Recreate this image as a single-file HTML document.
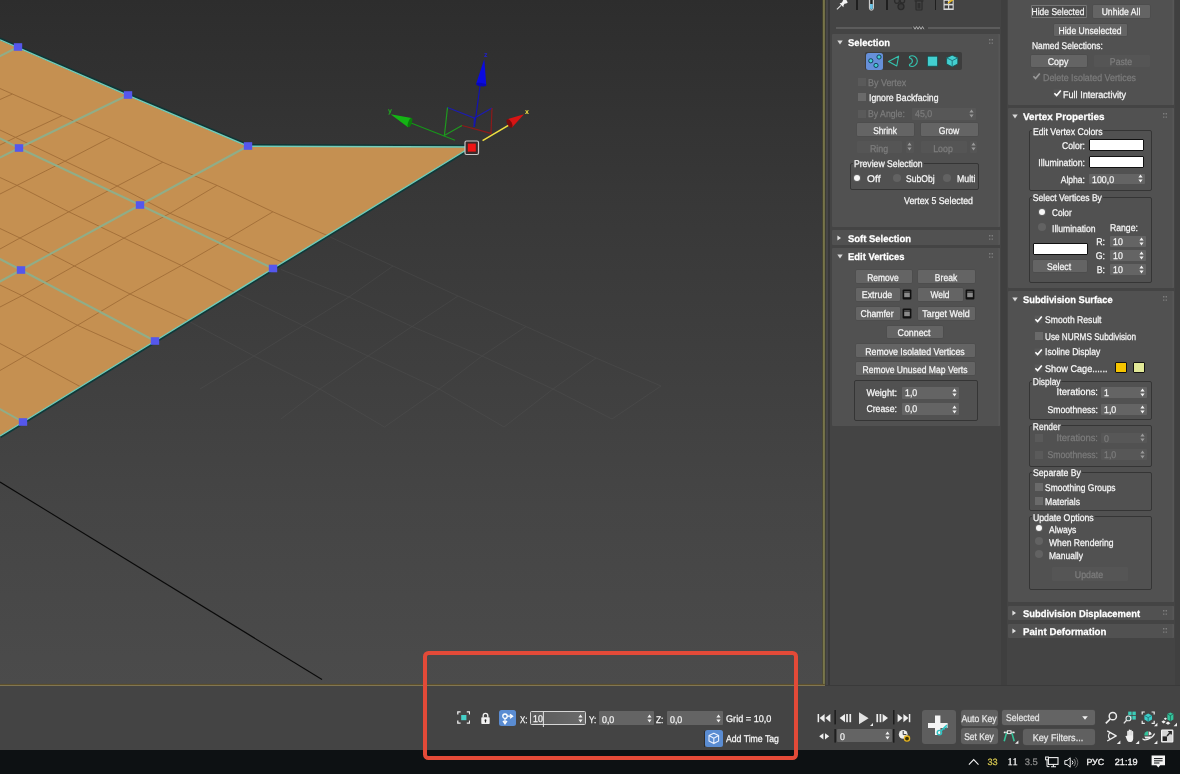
<!DOCTYPE html>
<html lang="en"><head><meta charset="utf-8"><title>3ds Max - Editable Poly vertex position</title>
<style>
*{box-sizing:border-box}
html,body{margin:0;padding:0}
body{width:1180px;height:774px;overflow:hidden;background:#444;position:relative;font-family:"Liberation Sans",sans-serif;font-size:9.8px;color:#f8f8f8;line-height:11px;-webkit-text-stroke:0.25px currentColor;text-rendering:geometricPrecision}
#w{position:absolute;left:0;top:0;width:1180px;height:774px;overflow:hidden;will-change:transform}
.a{position:absolute;white-space:nowrap}
.ro{position:absolute;background:#515151;border-radius:1px;box-shadow:inset -1.6px 0 0 #575757}
.t{position:absolute;white-space:nowrap;font-weight:bold;font-size:9.8px;color:#fff;line-height:11px}
.b{position:absolute;background:#646464;border-radius:1px;text-align:center;white-space:nowrap;color:#f6f6f6;box-shadow:0 0 0 0.4px #4a4a4a}
.b.d{background:#555555;color:#7e7e7e;box-shadow:none}
.g{position:absolute;border:1px solid #353535;border-radius:2px}
.gl{position:absolute;white-space:nowrap;background:#515151;padding:0 1px;line-height:10px}
.l{position:absolute;white-space:nowrap}
.s{display:inline-block;white-space:nowrap}
.s.c{position:absolute;left:50%;top:0;margin-left:-0.7px}
.s.v{transform:scaleX(0.9);transform-origin:0 50%}
.l.d{color:#7c7c7c}
.r{text-align:right}
.in{position:absolute;background:#646464;border-radius:1px;padding-left:3px;white-space:nowrap;color:#f4f4f4}
.in.d{background:#575757;color:#7c7c7c}
.sp{position:absolute;right:2px;top:50%;width:5px;height:9px;margin-top:-4.5px}
.cb{position:absolute;width:8px;height:8px;background:#6a6a6a}
.cb.d{background:#5a5a5a}
.ck{position:absolute;width:9px;height:9px}
.rd{position:absolute;width:8px;height:8px;border-radius:50%;background:#626262}
.rd.on{background:#f6f6f6;width:6px;height:6px}
.sw{position:absolute;background:#fff;border:1px solid #111;border-radius:1px}
.tri{position:absolute;width:0;height:0}
.grip{position:absolute;width:4px;height:5px;opacity:.42}
</style></head>
<body>
<div id="w">

<svg class="a" style="left:0;top:0" width="827" height="687" viewBox="0 0 827 687">
<defs><linearGradient id="vg" x1="0" y1="0" x2="0" y2="1"><stop offset="0" stop-color="#2d2d2d"/><stop offset="0.3" stop-color="#383838"/><stop offset="0.735" stop-color="#454545"/><stop offset="1" stop-color="#4b4b4b"/></linearGradient>
<clipPath id="oc"><polygon points="0,39.8 18,47.6 128,95.3 248,146.2 471,147 273,268.5 155,341 23,422 0,436"/></clipPath></defs>
<rect x="0" y="0" width="827" height="687" fill="url(#vg)"/>
<g stroke="#5a5a5a" stroke-width="0.9" opacity="0.32" fill="none">
<line x1="330" y1="237" x2="393" y2="266"/>
<line x1="393" y1="266" x2="458" y2="296"/>
<line x1="458" y1="296" x2="526" y2="326.5"/>
<line x1="526" y1="326.5" x2="596" y2="358"/>
<line x1="596" y1="358" x2="661" y2="386"/>
<line x1="281" y1="269.5" x2="349" y2="297"/>
<line x1="349" y1="297" x2="412" y2="326.5"/>
<line x1="412" y1="326.5" x2="482" y2="356"/>
<line x1="482" y1="356" x2="553" y2="389"/>
<line x1="553" y1="389" x2="612" y2="419"/>
<line x1="234" y1="292" x2="303" y2="325.5"/>
<line x1="303" y1="325.5" x2="368" y2="356"/>
<line x1="368" y1="356" x2="439" y2="389"/>
<line x1="439" y1="389" x2="504" y2="427"/>
<line x1="188" y1="320.8" x2="254" y2="356"/>
<line x1="254" y1="356" x2="320" y2="389"/>
<line x1="320" y1="389" x2="384.5" y2="427"/>
<line x1="393" y1="266" x2="349" y2="297"/>
<line x1="349" y1="297" x2="303" y2="325.5"/>
<line x1="303" y1="325.5" x2="254" y2="356"/>
<line x1="254" y1="356" x2="200" y2="389"/>
<line x1="458" y1="296" x2="412" y2="326.5"/>
<line x1="412" y1="326.5" x2="368" y2="356"/>
<line x1="368" y1="356" x2="320" y2="389"/>
<line x1="320" y1="389" x2="281" y2="419"/>
<line x1="526" y1="326.5" x2="482" y2="356"/>
<line x1="482" y1="356" x2="439" y2="389"/>
<line x1="439" y1="389" x2="384.5" y2="427"/>
<line x1="596" y1="358" x2="553" y2="389"/>
<line x1="553" y1="389" x2="504" y2="427"/>
<line x1="661" y1="386" x2="612" y2="419"/>
</g>
<polygon points="0,39.8 18,47.6 128,95.3 248,146.2 471,147 273,268.5 155,341 23,422 0,436" fill="#c59051"/>
<g clip-path="url(#oc)" stroke="#a06d38" stroke-width="0.9" fill="none">
<polyline points="0,88.5 12.4,94 62,115.7 110.7,137.4 162.8,162.2 217,185.4 272.9,211.8 327,235.4"/>
<polyline points="0,130 15.5,137.4 65,161.2 117.2,186 170,213.3 228,238.5 283,262.5"/>
<polyline points="0,177.5 17,185.4 68.8,211.8 124,238.1 181.4,265.5 234,292"/>
<polyline points="0,228.5 20,238 74.4,266 130,294 188,320.8"/>
<polyline points="0,285 22,295.6 77.5,325.3 137,352"/>
<polyline points="0,343.5 24.5,356.3 80,386.5"/>
<polyline points="12.4,94 0,99.5"/>
<polyline points="62,115.7 15.5,137.4 0,145"/>
<polyline points="110.7,137.4 65,161.2 17,185.4 0,194"/>
<polyline points="162.8,162.2 117.2,186 68.8,211.8 20,238 0,249"/>
<polyline points="217,185.4 170,213.3 124,238.1 74.4,266 22,295.6 0,307"/>
<polyline points="272.9,211.8 228,238.5 181.4,265.5 130,294 77.5,325.3 24.5,356.3 0,370.5"/>
</g>
<g clip-path="url(#oc)" stroke="#90ad88" stroke-width="2" fill="none" stroke-linecap="round">
<polyline points="18,47 0,56"/>
<polyline points="128,95 19,148 0,157.5"/>
<polyline points="19,148 140,205 273,268.5"/>
<polyline points="248,146 140,205 21,270 0,281.5"/>
<polyline points="21,270 155,341"/>
<polyline points="0,138.5 19,148"/>
<polyline points="0,259 21,270"/>
<polyline points="0,409 23,422"/>
</g>
<polyline points="0,39.8 18,47.6 128,95.3 248,146.2 471,147" fill="none" stroke="#0e3636" stroke-width="2.6" transform="translate(0,-1)"/><polyline points="471,147 273,268.5 155,341 23,422 0,436" fill="none" stroke="#0e3a3a" stroke-width="2.4" transform="translate(0.5,0.9)"/>
<polyline points="0,39.8 18,47.6 128,95.3 248,146.2 471,147 273,268.5 155,341 23,422 0,436" fill="none" stroke="#74cdb9" stroke-width="1.4"/>
<rect x="13.8" y="43.2" width="8.4" height="7.6" fill="#5557ec"/>
<rect x="123.8" y="91.2" width="8.4" height="7.6" fill="#5557ec"/>
<rect x="243.8" y="142.2" width="8.4" height="7.6" fill="#5557ec"/>
<rect x="14.8" y="144.2" width="8.4" height="7.6" fill="#5557ec"/>
<rect x="135.8" y="201.2" width="8.4" height="7.6" fill="#5557ec"/>
<rect x="268.8" y="264.7" width="8.4" height="7.6" fill="#5557ec"/>
<rect x="16.8" y="266.2" width="8.4" height="7.6" fill="#5557ec"/>
<rect x="150.8" y="337.2" width="8.4" height="7.6" fill="#5557ec"/>
<rect x="18.8" y="418.2" width="8.4" height="7.6" fill="#5557ec"/>
<line x1="0" y1="482" x2="322" y2="679.5" stroke="#0a0a0a" stroke-width="1.1"/>
<g fill="none" stroke-width="1.2">
<polyline points="447.5,107.5 474.4,118 492,108" stroke="#1c1cb0"/>
<line x1="474.4" y1="118" x2="474" y2="127" stroke="#1c1cb0"/>
<polyline points="447.5,107.5 444.4,135.4 462,125.5" stroke="#1f9a1f"/>
<polyline points="492,108 491,133.4 462,125.5" stroke="#8c1a1a"/>
<line x1="480.2" y1="85" x2="474.4" y2="127" stroke="#1212b4" stroke-width="1.2"/>
<line x1="411" y1="123" x2="455" y2="140.3" stroke="#17961a" stroke-width="1.2"/>
<line x1="482.6" y1="140.6" x2="510.5" y2="124" stroke="#f0e040" stroke-width="1.5"/>
</g>
<polygon points="484.3,59 476.2,83.5 486.3,85.6" fill="#0a0ae0"/>
<ellipse cx="481.2" cy="84.6" rx="5.2" ry="1.6" fill="#0808b8" transform="rotate(8 481.2 84.6)"/>
<polygon points="390.6,114.2 411.5,118 408,127.2" fill="#14b414"/>
<ellipse cx="410" cy="122.6" rx="1.8" ry="4.8" fill="#0c7a0c" transform="rotate(20 410 122.6)"/>
<polygon points="524,114.3 507.5,119.2 512,127.5" fill="#d81414"/>
<ellipse cx="509.5" cy="123.4" rx="2.2" ry="4.6" fill="#7a0a0a" transform="rotate(-28 509.5 123.4)"/>
<text x="484" y="57" font-family="Liberation Sans, sans-serif" font-size="7" font-weight="bold" fill="#2020d0">z</text>
<text x="388" y="113" font-family="Liberation Sans, sans-serif" font-size="7" font-weight="bold" fill="#20b020">y</text>
<text x="525" y="114" font-family="Liberation Sans, sans-serif" font-size="7" font-weight="bold" fill="#f0e040">x</text>
<rect x="465" y="141" width="13.5" height="13.5" rx="1.5" fill="#3a2a2a" stroke="#c8c8c8" stroke-width="1.2"/>
<rect x="467.8" y="143.6" width="8" height="8" fill="#f01414"/>
<rect x="822.4" y="0" width="0.8" height="685" fill="#4c4a2c"/><rect x="823.1" y="0" width="1.8" height="686" fill="#7f7c4c"/><rect x="824.9" y="0" width="0.9" height="686.6" fill="#3e3d33"/>
<rect x="0" y="683.9" width="824.8" height="1.1" fill="#5c4f2c"/><rect x="0" y="685" width="824.8" height="1.1" fill="#817652"/><rect x="0" y="686" width="826" height="1" fill="#3f4141"/>
</svg><div class="a" style="left:825.6px;top:0;width:2.6px;height:685px;background:#474647"></div>
<div class="a" style="left:828.2px;top:0;width:1.5px;height:685px;background:#383838"></div>
<div class="a" style="left:1001px;top:0;width:6px;height:685px;background:#3f3f3f"></div>
<div class="a" style="left:1175px;top:0;width:5px;height:685px;background:#404040"></div>
<div class="a" style="left:836px;top:27.2px;width:75.5px;height:1.6px;background:#5c5c5c"></div>
<div class="a" style="left:927.5px;top:27.2px;width:72.5px;height:1.6px;background:#5c5c5c"></div>
<svg class="a" style="left:913px;top:26.4px" width="12" height="4" viewBox="0 0 12 4"><path d="M0.5 0.6L2 3.2L3.5 0.6L5 3.2L6.5 0.6L8 3.2L9.5 0.6L11 3.2" fill="none" stroke="#b8b8b8" stroke-width="0.9"/></svg>
<div class="a" style="left:856.3px;top:0;width:1.7px;height:10.2px;background:#1f1f1f"></div>
<div class="a" style="left:886px;top:0;width:1.7px;height:10.2px;background:#1f1f1f"></div>
<div class="a" style="left:934.5px;top:0;width:1.7px;height:10.2px;background:#1f1f1f"></div>
<svg class="a" style="left:836px;top:0" width="13" height="10" viewBox="0 0 13 10"><path d="M0.9 9.3L5 5.4" stroke="#e4e4e4" stroke-width="1.1" fill="none"/><path d="M3.6 3.4L6 2.6L7.2 0H10.4L11.8 2.4L10.2 3.6L8.6 3.8L7.6 5.2L7.4 7.2z" fill="#f4f4f4"/></svg>
<svg class="a" style="left:867.5px;top:0" width="7" height="11" viewBox="0 0 7 11"><path d="M1.4 0V8.2a2 2 0 0 0 4 0V0" fill="none" stroke="#dcdcdc" stroke-width="1"/><path d="M2 4H4.8V8a1.4 1.4 0 0 1-2.8 0z" fill="#6cc4e6"/><rect x="3" y="0" width="0.9" height="4" fill="#1a1a1a"/></svg>
<svg class="a" style="left:893px;top:0" width="15" height="11" viewBox="0 0 15 11"><circle cx="4" cy="1" r="2.4" fill="none" stroke="#2c2c2c" stroke-width="1.3"/><circle cx="9.4" cy="0.8" r="2.2" fill="none" stroke="#2c2c2c" stroke-width="1.3"/><circle cx="8" cy="6.6" r="3" fill="#3a3a3a" stroke="#2a2a2a" stroke-width="1.3"/></svg>
<svg class="a" style="left:914px;top:0" width="10" height="11" viewBox="0 0 10 11"><path d="M0.6 0.8H9.4M2 1.4V9.2a0.8 0.8 0 0 0 0.8 0.8H7.2a0.8 0.8 0 0 0 0.8-0.8V1.4M4.2 3V8.4M5.8 3V8.4" fill="none" stroke="#2b2b2b" stroke-width="1.2"/></svg>
<svg class="a" style="left:943px;top:0" width="12" height="11" viewBox="0 0 12 11"><rect x="0.5" y="-1" width="10.2" height="11" fill="#d8d8d8"/><rect x="1.6" y="0.8" width="3.4" height="3" fill="#3a3a3a"/><rect x="6.2" y="0.8" width="3.4" height="3" fill="#3a3a3a"/><rect x="1.6" y="5.4" width="3.4" height="3" fill="#3a3a3a"/><rect x="6.2" y="5.4" width="3.4" height="3" fill="#3a3a3a"/><path d="M5 3.2L10.8 -1" stroke="#e8b820" stroke-width="1.6"/></svg>
<div class="ro" style="left:832px;top:34px;width:168px;height:193px"></div>
<div class="t" style="left:847.8px;top:37.7px;transform:scaleX(0.964);transform-origin:0 50%">Selection</div>
<svg class="a" style="left:837px;top:39.7px" width="6" height="5" viewBox="0 0 6 5"><path d="M0.3 0.5H5.7L3 4.4z" fill="#d8d8d8"/></svg>
<svg class="grip" style="left:989px;top:38.8px" viewBox="0 0 4 5"><path d="M0 0h1.4v1.4H0zM2.6 0H4v1.4H2.6zM0 3.4h1.4v1.4H0zM2.6 3.4H4v1.4H2.6z" fill="#bbb"/></svg>
<div class="a" style="left:865.2px;top:52px;width:97px;height:18.4px;background:#3d3d3d;border-radius:2px"></div>
<div class="a" style="left:865.5px;top:52.5px;width:17.8px;height:17.6px;background:#6690da;border-radius:2.5px"></div>
<svg class="a" style="left:865.4px;top:52.3px" width="97" height="18" viewBox="0 0 97 18"><g fill="#43cfd0" stroke="#0d3550" stroke-width="0.9"><circle cx="5.8" cy="8.8" r="2.1"/><circle cx="14" cy="5" r="2.1"/><circle cx="11" cy="13.4" r="2.1"/></g><path d="M23.6 9.6L33.6 4.2L31.8 14z" fill="none" stroke="#35c4b0" stroke-width="1.1" stroke-linejoin="round"/><path d="M44.6 4.4A5.3 5.3 0 1 1 44.6 13.8L44.4 12.4C46.8 11.6 47.4 10.4 47.4 9.1C47.4 7.8 46.8 6.6 44.4 5.8z" fill="none" stroke="#35c4b0" stroke-width="1.1" stroke-linejoin="round"/><rect x="62.4" y="4.2" width="10.2" height="10" fill="#43cfd0" stroke="#14504f" stroke-width="0.8"/><path d="M87.2 3.2L92.8 5.8V12L87.2 14.8L81.6 12V5.8z" fill="#43cfd0" stroke="#14504f" stroke-width="0.8"/><path d="M81.6 5.8L87.2 8.6L92.8 5.8M87.2 8.6V14.8" fill="none" stroke="#1d6f78" stroke-width="0.9"/></svg>
<div class="cb d" style="left:858px;top:78.3px"></div>
<div class="l d" style="left:868.1px;top:78.3px;transform:scaleX(0.913);transform-origin:0 50%">By Vertex</div>
<div class="cb" style="left:858px;top:93.2px"></div>
<div class="l" style="left:868.5px;top:92.7px;transform:scaleX(0.886);transform-origin:0 50%">Ignore Backfacing</div>
<div class="cb d" style="left:858px;top:109.6px"></div>
<div class="l d" style="left:868px;top:108.9px;transform:scaleX(0.889);transform-origin:0 50%">By Angle:</div>
<div class="in d" style="left:912px;top:108px;width:64px;height:11.6px;line-height:14.4px"><span class="s v">45,0</span><svg class="sp" viewBox="0 0 5 9"><path d="M2.5 0.6L4.6 3.4H0.4zM2.5 8.4L4.6 5.6H0.4z" fill="#9a9a9a"/></svg></div>
<div class="b" style="left:856.8px;top:123px;width:57.4px;height:13px;line-height:17.4px"><span class="s c" style="transform:translateX(-50%) scaleX(0.853)">Shrink</span></div>
<div class="b" style="left:921px;top:123px;width:57px;height:13px;line-height:17.4px"><span class="s c" style="transform:translateX(-50%) scaleX(0.880)">Grow</span></div>
<div class="b d" style="left:856.8px;top:140.7px;width:45.6px;height:12.6px;line-height:17px"><span class="s c" style="transform:translateX(-50%) scaleX(0.900)">Ring</span></div>
<div class="b d" style="left:921px;top:140.7px;width:46px;height:12.6px;line-height:17px"><span class="s c" style="transform:translateX(-50%) scaleX(0.900)">Loop</span></div>
<div class="b d" style="left:906.2px;top:140.7px;width:7.4px;height:12.6px"><svg style="position:absolute;left:1.2px;top:1.8px" width="5" height="9" viewBox="0 0 5 9"><path d="M2.5 0.6L4.6 3.4H0.4zM2.5 8.4L4.6 5.6H0.4z" fill="#9a9a9a"/></svg></div>
<div class="b d" style="left:969.8px;top:140.7px;width:7.4px;height:12.6px"><svg style="position:absolute;left:1.2px;top:1.8px" width="5" height="9" viewBox="0 0 5 9"><path d="M2.5 0.6L4.6 3.4H0.4zM2.5 8.4L4.6 5.6H0.4z" fill="#9a9a9a"/></svg></div>
<div class="g" style="left:850px;top:162.7px;width:128.6px;height:27.2px"></div>
<div class="gl" style="left:853.2px;top:160.2px;transform:scaleX(0.883);transform-origin:0 50%">Preview Selection</div>
<div class="rd" style="left:853.2px;top:173.6px"></div>
<div class="rd on" style="left:854.2px;top:174.6px"></div>
<div class="l" style="left:866.5px;top:173.6px;transform:scaleX(1.047);transform-origin:0 50%">Off</div>
<div class="rd" style="left:893px;top:173.8px"></div>
<div class="l" style="left:906.4px;top:173.6px;transform:scaleX(0.875);transform-origin:0 50%">SubObj</div>
<div class="rd" style="left:943.4px;top:173.8px"></div>
<div class="l" style="left:956.5px;top:173.6px;transform:scaleX(0.894);transform-origin:0 50%">Multi</div>
<div class="l" style="left:904px;top:195.6px;transform:scaleX(0.898);transform-origin:0 50%">Vertex 5 Selected</div>
<div class="ro" style="left:832px;top:229.5px;width:168px;height:15.2px"></div>
<div class="t" style="left:847.8px;top:233.5px;transform:scaleX(0.964);transform-origin:0 50%">Soft Selection</div>
<svg class="a" style="left:837px;top:234.7px" width="5" height="6" viewBox="0 0 5 6"><path d="M0.4 0.6V5.4L4 3z" fill="#e0e0e0"/></svg>
<svg class="grip" style="left:989px;top:234.8px" viewBox="0 0 4 5"><path d="M0 0h1.4v1.4H0zM2.6 0H4v1.4H2.6zM0 3.4h1.4v1.4H0zM2.6 3.4H4v1.4H2.6z" fill="#bbb"/></svg>
<div class="ro" style="left:832px;top:247.5px;width:168px;height:178.5px"></div>
<div class="t" style="left:847.8px;top:251.8px;transform:scaleX(0.960);transform-origin:0 50%">Edit Vertices</div>
<svg class="a" style="left:837px;top:253.5px" width="6" height="5" viewBox="0 0 6 5"><path d="M0.3 0.5H5.7L3 4.4z" fill="#d8d8d8"/></svg>
<svg class="grip" style="left:989px;top:252.6px" viewBox="0 0 4 5"><path d="M0 0h1.4v1.4H0zM2.6 0H4v1.4H2.6zM0 3.4h1.4v1.4H0zM2.6 3.4H4v1.4H2.6z" fill="#bbb"/></svg>
<div class="b" style="left:855.9px;top:270px;width:56.5px;height:13px;line-height:17.4px"><span class="s c" style="transform:translateX(-50%) scaleX(0.863)">Remove</span></div>
<div class="b" style="left:918.2px;top:270px;width:56.8px;height:13px;line-height:17.4px"><span class="s c" style="transform:translateX(-50%) scaleX(0.871)">Break</span></div>
<div class="b" style="left:855.9px;top:288px;width:44.4px;height:13px;line-height:16.2px"><span class="s c" style="transform:translateX(-50%) scaleX(0.903)">Extrude</span></div>
<svg class="a" style="left:902.2px;top:289px" width="10" height="11" viewBox="0 0 10 11"><rect x="0.6" y="0.6" width="8.8" height="9.8" rx="1" fill="#101010"/><rect x="2.2" y="3.6" width="5.6" height="4.6" fill="#8a8a8a"/><rect x="2.2" y="2.2" width="5.6" height="1" fill="#5a5a5a"/></svg>
<div class="b" style="left:918.2px;top:288px;width:44.4px;height:13px;line-height:16.2px"><span class="s c" style="transform:translateX(-50%) scaleX(0.858)">Weld</span></div>
<svg class="a" style="left:964.6px;top:289px" width="10" height="11" viewBox="0 0 10 11"><rect x="0.6" y="0.6" width="8.8" height="9.8" rx="1" fill="#101010"/><rect x="2.2" y="3.6" width="5.6" height="4.6" fill="#8a8a8a"/><rect x="2.2" y="2.2" width="5.6" height="1" fill="#5a5a5a"/></svg>
<div class="b" style="left:855.9px;top:307px;width:44.4px;height:13px;line-height:16.2px"><span class="s c" style="transform:translateX(-50%) scaleX(0.881)">Chamfer</span></div>
<svg class="a" style="left:902.2px;top:308px" width="10" height="11" viewBox="0 0 10 11"><rect x="0.6" y="0.6" width="8.8" height="9.8" rx="1" fill="#101010"/><rect x="2.2" y="3.6" width="5.6" height="4.6" fill="#8a8a8a"/><rect x="2.2" y="2.2" width="5.6" height="1" fill="#5a5a5a"/></svg>
<div class="b" style="left:918.2px;top:307px;width:56.8px;height:13px;line-height:16.2px"><span class="s c" style="transform:translateX(-50%) scaleX(0.914)">Target Weld</span></div>
<div class="b" style="left:887px;top:325.5px;width:56px;height:12.5px;line-height:16.9px"><span class="s c" style="transform:translateX(-50%) scaleX(0.899)">Connect</span></div>
<div class="b" style="left:855.9px;top:344px;width:119.1px;height:13px;line-height:17.4px"><span class="s c" style="transform:translateX(-50%) scaleX(0.896)">Remove Isolated Vertices</span></div>
<div class="b" style="left:855.9px;top:362.2px;width:119.1px;height:12.9px;line-height:17.3px"><span class="s c" style="transform:translateX(-50%) scaleX(0.876)">Remove Unused Map Verts</span></div>
<div class="g" style="left:854px;top:379.7px;width:123.5px;height:40.9px"></div>
<div class="l r" style="left:776.5px;width:120px;top:387.7px;transform:scaleX(0.926);transform-origin:100% 50%">Weight:</div>
<div class="in" style="left:902px;top:387px;width:57.3px;height:11.6px;line-height:14.4px"><span class="s v">1,0</span><svg class="sp" viewBox="0 0 5 9"><path d="M2.5 0.6L4.6 3.4H0.4zM2.5 8.4L4.6 5.6H0.4z" fill="#f0f0f0"/></svg></div>
<div class="l r" style="left:776.5px;width:120px;top:403.8px;transform:scaleX(0.892);transform-origin:100% 50%">Crease:</div>
<div class="in" style="left:902px;top:403.4px;width:57.3px;height:11.8px;line-height:14.6px"><span class="s v">0,0</span><svg class="sp" viewBox="0 0 5 9"><path d="M2.5 0.6L4.6 3.4H0.4zM2.5 8.4L4.6 5.6H0.4z" fill="#f0f0f0"/></svg></div>
<div class="ro" style="left:1008px;top:-4px;width:166.4px;height:108.7px"></div>
<div class="b" style="left:1030.9px;top:5.4px;width:56.1px;height:12.2px;line-height:16.6px;background:#4d4d4d;box-shadow:inset 0 0 0 0.9px #767676"><span class="s c" style="transform:translateX(-50%) scaleX(0.865)">Hide Selected</span></div>
<div class="b" style="left:1093px;top:5.4px;width:57px;height:12.4px;line-height:16.8px"><span class="s c" style="transform:translateX(-50%) scaleX(0.877)">Unhide All</span></div>
<div class="b" style="left:1054.3px;top:24.2px;width:72.7px;height:12.2px;line-height:16.6px"><span class="s c" style="transform:translateX(-50%) scaleX(0.876)">Hide Unselected</span></div>
<div class="l" style="left:1031.7px;top:40.7px;transform:scaleX(0.862);transform-origin:0 50%">Named Selections:</div>
<div class="b" style="left:1030.7px;top:54.6px;width:56.3px;height:12.2px;line-height:16.6px"><span class="s c" style="transform:translateX(-50%) scaleX(0.900)">Copy</span></div>
<div class="b d" style="left:1094px;top:54.6px;width:56px;height:12.2px;line-height:16.6px"><span class="s c" style="transform:translateX(-50%) scaleX(0.890)">Paste</span></div>
<svg class="ck" style="left:1032.3px;top:72.3px" viewBox="0 0 9 9"><rect x="0.5" y="0.5" width="8" height="8" fill="#545454"/><path d="M1.4 4.2L3.6 6.6L7.8 1.4" fill="none" stroke="#9a9a9a" stroke-width="1.6"/></svg>
<div class="l d" style="left:1042.8px;top:72.6px;transform:scaleX(0.904);transform-origin:0 50%">Delete Isolated Vertices</div>
<svg class="ck" style="left:1052.5px;top:89.3px" viewBox="0 0 9 9"><rect x="0.5" y="0.5" width="8" height="8" fill="#585858"/><path d="M1.4 4.2L3.6 6.6L7.8 1.4" fill="none" stroke="#ffffff" stroke-width="1.6"/></svg>
<div class="l" style="left:1062.7px;top:89.6px;transform:scaleX(0.926);transform-origin:0 50%">Full Interactivity</div>
<div class="ro" style="left:1008px;top:107.5px;width:166.4px;height:180.5px"></div>
<div class="t" style="left:1023.1px;top:111.5px;transform:scaleX(1.012);transform-origin:0 50%">Vertex Properties</div>
<svg class="a" style="left:1012.3px;top:113.7px" width="6" height="5" viewBox="0 0 6 5"><path d="M0.3 0.5H5.7L3 4.4z" fill="#d8d8d8"/></svg>
<svg class="grip" style="left:1163.4px;top:112.8px" viewBox="0 0 4 5"><path d="M0 0h1.4v1.4H0zM2.6 0H4v1.4H2.6zM0 3.4h1.4v1.4H0zM2.6 3.4H4v1.4H2.6z" fill="#bbb"/></svg>
<div class="g" style="left:1029px;top:130.1px;width:122.6px;height:61.3px"></div>
<div class="gl" style="left:1032.3px;top:127.6px;transform:scaleX(0.889);transform-origin:0 50%">Edit Vertex Colors</div>
<div class="l r" style="left:965px;width:120px;top:140.8px;transform:scaleX(0.876);transform-origin:100% 50%">Color:</div>
<div class="sw" style="left:1088.9px;top:139.3px;width:54.7px;height:11.4px;background:#fff"></div>
<div class="l r" style="left:965px;width:120px;top:157.5px;transform:scaleX(0.893);transform-origin:100% 50%">Illumination:</div>
<div class="sw" style="left:1088.9px;top:156.2px;width:54.7px;height:11.4px;background:#fff"></div>
<div class="l r" style="left:965.4px;width:120px;top:174.9px;transform:scaleX(0.875);transform-origin:100% 50%">Alpha:</div>
<div class="in" style="left:1088.9px;top:173.5px;width:56.1px;height:10.9px;line-height:13.7px"><span class="s v">100,0</span><svg class="sp" viewBox="0 0 5 9"><path d="M2.5 0.6L4.6 3.4H0.4zM2.5 8.4L4.6 5.6H0.4z" fill="#f0f0f0"/></svg></div>
<div class="g" style="left:1029px;top:196.9px;width:122.6px;height:86.2px"></div>
<div class="gl" style="left:1032.3px;top:194.4px;transform:scaleX(0.874);transform-origin:0 50%">Select Vertices By</div>
<div class="rd" style="left:1038px;top:208px"></div>
<div class="rd on" style="left:1039px;top:209px"></div>
<div class="l" style="left:1051.9px;top:208.1px;transform:scaleX(0.841);transform-origin:0 50%">Color</div>
<div class="rd" style="left:1038px;top:223.3px"></div>
<div class="l" style="left:1052.2px;top:223.5px;transform:scaleX(0.880);transform-origin:0 50%">Illumination</div>
<div class="l" style="left:1109.9px;top:223.2px;transform:scaleX(0.883);transform-origin:0 50%">Range:</div>
<div class="l r" style="left:984.6px;width:120px;top:236.9px;transform:scaleX(0.900);transform-origin:100% 50%">R:</div>
<div class="in" style="left:1109.9px;top:236.2px;width:36px;height:10.8px;line-height:13.6px"><span class="s v">10</span><svg class="sp" viewBox="0 0 5 9"><path d="M2.5 0.6L4.6 3.4H0.4zM2.5 8.4L4.6 5.6H0.4z" fill="#f0f0f0"/></svg></div>
<div class="l r" style="left:984.6px;width:120px;top:250.8px;transform:scaleX(0.900);transform-origin:100% 50%">G:</div>
<div class="in" style="left:1109.9px;top:250px;width:36px;height:11px;line-height:13.8px"><span class="s v">10</span><svg class="sp" viewBox="0 0 5 9"><path d="M2.5 0.6L4.6 3.4H0.4zM2.5 8.4L4.6 5.6H0.4z" fill="#f0f0f0"/></svg></div>
<div class="l r" style="left:984.6px;width:120px;top:264.85px;transform:scaleX(0.900);transform-origin:100% 50%">B:</div>
<div class="in" style="left:1109.9px;top:264.1px;width:36px;height:10.9px;line-height:13.7px"><span class="s v">10</span><svg class="sp" viewBox="0 0 5 9"><path d="M2.5 0.6L4.6 3.4H0.4zM2.5 8.4L4.6 5.6H0.4z" fill="#f0f0f0"/></svg></div>
<div class="sw" style="left:1032.8px;top:243.1px;width:55px;height:11.8px;background:#fff"></div>
<div class="b" style="left:1032.8px;top:260.1px;width:54.2px;height:11.9px;line-height:16.3px"><span class="s c" style="transform:translateX(-50%) scaleX(0.885)">Select</span></div>
<div class="ro" style="left:1008px;top:290.5px;width:166.4px;height:311.3px"></div>
<div class="t" style="left:1023.1px;top:294.5px;transform:scaleX(0.952);transform-origin:0 50%">Subdivision Surface</div>
<svg class="a" style="left:1012.3px;top:296.7px" width="6" height="5" viewBox="0 0 6 5"><path d="M0.3 0.5H5.7L3 4.4z" fill="#d8d8d8"/></svg>
<svg class="grip" style="left:1163.4px;top:295.8px" viewBox="0 0 4 5"><path d="M0 0h1.4v1.4H0zM2.6 0H4v1.4H2.6zM0 3.4h1.4v1.4H0zM2.6 3.4H4v1.4H2.6z" fill="#bbb"/></svg>
<svg class="ck" style="left:1034.4px;top:315.1px" viewBox="0 0 9 9"><rect x="0.5" y="0.5" width="8" height="8" fill="#585858"/><path d="M1.4 4.2L3.6 6.6L7.8 1.4" fill="none" stroke="#ffffff" stroke-width="1.6"/></svg>
<div class="l" style="left:1044.6px;top:314.7px;transform:scaleX(0.879);transform-origin:0 50%">Smooth Result</div>
<div class="cb" style="left:1034.9px;top:332.3px"></div>
<div class="l" style="left:1044.6px;top:331.6px;transform:scaleX(0.836);transform-origin:0 50%">Use NURMS Subdivision</div>
<svg class="ck" style="left:1034.4px;top:347.7px" viewBox="0 0 9 9"><rect x="0.5" y="0.5" width="8" height="8" fill="#585858"/><path d="M1.4 4.2L3.6 6.6L7.8 1.4" fill="none" stroke="#ffffff" stroke-width="1.6"/></svg>
<div class="l" style="left:1044.6px;top:347.3px;transform:scaleX(0.875);transform-origin:0 50%">Isoline Display</div>
<svg class="ck" style="left:1034.4px;top:363.7px" viewBox="0 0 9 9"><rect x="0.5" y="0.5" width="8" height="8" fill="#585858"/><path d="M1.4 4.2L3.6 6.6L7.8 1.4" fill="none" stroke="#ffffff" stroke-width="1.6"/></svg>
<div class="l" style="left:1044.6px;top:364.1px;transform:scaleX(0.933);transform-origin:0 50%">Show Cage......</div>
<div class="sw" style="left:1115.2px;top:361.9px;width:11.8px;height:11.4px;background:#f6c500"></div>
<div class="sw" style="left:1133px;top:361.9px;width:11.8px;height:11.4px;background:#e2e997"></div>
<div class="g" style="left:1029px;top:380.7px;width:122.6px;height:39.8px"></div>
<div class="gl" style="left:1032.3px;top:378.2px;transform:scaleX(0.862);transform-origin:0 50%">Display</div>
<div class="l r" style="left:977.6px;width:120px;top:387.2px;transform:scaleX(0.964);transform-origin:100% 50%">Iterations:</div>
<div class="in" style="left:1101.1px;top:386.9px;width:45.9px;height:11.1px;line-height:13.9px"><span class="s v">1</span><svg class="sp" viewBox="0 0 5 9"><path d="M2.5 0.6L4.6 3.4H0.4zM2.5 8.4L4.6 5.6H0.4z" fill="#f0f0f0"/></svg></div>
<div class="l r" style="left:977.6px;width:120px;top:404.9px;transform:scaleX(0.883);transform-origin:100% 50%">Smoothness:</div>
<div class="in" style="left:1101.1px;top:403.9px;width:45.9px;height:11.1px;line-height:13.9px"><span class="s v">1,0</span><svg class="sp" viewBox="0 0 5 9"><path d="M2.5 0.6L4.6 3.4H0.4zM2.5 8.4L4.6 5.6H0.4z" fill="#f0f0f0"/></svg></div>
<div class="g" style="left:1029px;top:425.4px;width:122.6px;height:41.9px"></div>
<div class="gl" style="left:1032.3px;top:422.9px;transform:scaleX(0.862);transform-origin:0 50%">Render</div>
<div class="cb d" style="left:1034.9px;top:433.8px"></div>
<div class="l d r" style="left:977.6px;width:120px;top:432.8px;transform:scaleX(0.964);transform-origin:100% 50%">Iterations:</div>
<div class="in d" style="left:1101.1px;top:432.5px;width:45.9px;height:10.9px;line-height:13.7px"><span class="s v">0</span><svg class="sp" viewBox="0 0 5 9"><path d="M2.5 0.6L4.6 3.4H0.4zM2.5 8.4L4.6 5.6H0.4z" fill="#9a9a9a"/></svg></div>
<div class="cb d" style="left:1034.9px;top:450.8px"></div>
<div class="l d r" style="left:977.6px;width:120px;top:450px;transform:scaleX(0.883);transform-origin:100% 50%">Smoothness:</div>
<div class="in d" style="left:1101.1px;top:449px;width:45.9px;height:11px;line-height:13.8px"><span class="s v">1,0</span><svg class="sp" viewBox="0 0 5 9"><path d="M2.5 0.6L4.6 3.4H0.4zM2.5 8.4L4.6 5.6H0.4z" fill="#9a9a9a"/></svg></div>
<div class="g" style="left:1029px;top:471.8px;width:122.6px;height:39.2px"></div>
<div class="gl" style="left:1032.3px;top:469.3px;transform:scaleX(0.890);transform-origin:0 50%">Separate By</div>
<div class="cb" style="left:1034.9px;top:482.7px"></div>
<div class="l" style="left:1044.6px;top:482.7px;transform:scaleX(0.864);transform-origin:0 50%">Smoothing Groups</div>
<div class="cb" style="left:1034.9px;top:497.4px"></div>
<div class="l" style="left:1044.6px;top:496.6px;transform:scaleX(0.883);transform-origin:0 50%">Materials</div>
<div class="g" style="left:1029px;top:516.2px;width:122.6px;height:73.4px"></div>
<div class="gl" style="left:1032.3px;top:513.7px;transform:scaleX(0.894);transform-origin:0 50%">Update Options</div>
<div class="rd" style="left:1034.8px;top:524.2px"></div>
<div class="rd on" style="left:1035.8px;top:525.2px"></div>
<div class="l" style="left:1049px;top:524.6px;transform:scaleX(0.883);transform-origin:0 50%">Always</div>
<div class="rd" style="left:1034.8px;top:537.1px"></div>
<div class="l" style="left:1049px;top:537.9px;transform:scaleX(0.878);transform-origin:0 50%">When Rendering</div>
<div class="rd" style="left:1034.8px;top:550px"></div>
<div class="l" style="left:1049px;top:550.8px;transform:scaleX(0.864);transform-origin:0 50%">Manually</div>
<div class="b d" style="left:1051.9px;top:567.3px;width:76.2px;height:13.8px;line-height:18.2px"><span class="s c" style="transform:translateX(-50%) scaleX(0.896)">Update</span></div>
<div class="ro" style="left:1008px;top:605.8px;width:166.4px;height:14.2px"></div>
<div class="t" style="left:1023.1px;top:609.4px;transform:scaleX(0.960);transform-origin:0 50%">Subdivision Displacement</div>
<svg class="a" style="left:1012.3px;top:610.3px" width="5" height="6" viewBox="0 0 5 6"><path d="M0.4 0.6V5.4L4 3z" fill="#e0e0e0"/></svg>
<svg class="grip" style="left:1163.4px;top:610.4px" viewBox="0 0 4 5"><path d="M0 0h1.4v1.4H0zM2.6 0H4v1.4H2.6zM0 3.4h1.4v1.4H0zM2.6 3.4H4v1.4H2.6z" fill="#bbb"/></svg>
<div class="ro" style="left:1008px;top:624px;width:166.4px;height:14px"></div>
<div class="t" style="left:1023.1px;top:627.2px;transform:scaleX(0.989);transform-origin:0 50%">Paint Deformation</div>
<svg class="a" style="left:1012.3px;top:628.2px" width="5" height="6" viewBox="0 0 5 6"><path d="M0.4 0.6V5.4L4 3z" fill="#e0e0e0"/></svg>
<svg class="grip" style="left:1163.4px;top:628.3px" viewBox="0 0 4 5"><path d="M0 0h1.4v1.4H0zM2.6 0H4v1.4H2.6zM0 3.4h1.4v1.4H0zM2.6 3.4H4v1.4H2.6z" fill="#bbb"/></svg><div class="a" style="left:0;top:686px;width:1180px;height:63.6px;background:#444444"></div>
<div class="a" style="left:825px;top:684.6px;width:355px;height:1.2px;background:#3a3a3a"></div>
<div class="a" style="left:0;top:749.5px;width:1180px;height:25px;background:#0d1113"></div>
<svg class="a" style="left:456.5px;top:711.3px" width="13.4" height="13" viewBox="0 0 13.4 13"><path d="M0.8 3.6V0.8H3.6M9.8 0.8H12.6V3.6M12.6 9.4V12.2H9.8M3.6 12.2H0.8V9.4" fill="none" stroke="#ededed" stroke-width="1.3"/><rect x="4.2" y="4" width="5.2" height="5.2" fill="#45d0c8"/></svg>
<svg class="a" style="left:480.6px;top:711.8px" width="9" height="12.4" viewBox="0 0 9 12.4"><path d="M2.2 5.4V3.6a2.3 2.3 0 0 1 4.6 0V5.4" fill="none" stroke="#f2f2f2" stroke-width="1.3"/><rect x="0.3" y="5.2" width="8.4" height="6.8" rx="0.8" fill="#f2f2f2"/><path d="M4.5 7.2a1 1 0 0 1 0.6 1.8V10.6H3.9V9a1 1 0 0 1 0.6-1.8z" fill="#222"/></svg>
<div class="a" style="left:498.9px;top:709.6px;width:17.4px;height:16.6px;background:#5a8cd2;border-radius:2.5px"></div>
<svg class="a" style="left:498.9px;top:709.6px" width="17.4" height="16.6" viewBox="0 0 17.4 16.6"><circle cx="6" cy="6.2" r="2.2" fill="none" stroke="#fff" stroke-width="1.3"/><path d="M8.2 6.2H12.6M11 4.2L13.6 6.2L11 8.2M6 8.4V12.4M4 11L6 13.8L8 11" fill="none" stroke="#fff" stroke-width="1.3"/></svg>
<div class="l" style="left:519.8px;top:714.5px;transform:scaleX(0.810);transform-origin:0 50%">X:</div>
<div class="in" style="left:530.4px;top:710.9px;width:55.8px;height:14.4px;line-height:15px;border:1.2px solid #d6d6d6;border-radius:1.5px;padding-left:2px;background:linear-gradient(90deg,#5a5a5a,#6a6a6a)"><span class="s v" style="border-right:1px solid #eee;padding-right:0.5px">10</span><svg class="sp" viewBox="0 0 5 9"><path d="M2.5 0.6L4.6 3.4H0.4zM2.5 8.4L4.6 5.6H0.4z" fill="#f0f0f0"/></svg></div>
<div class="l" style="left:588.5px;top:714.5px;transform:scaleX(0.826);transform-origin:0 50%">Y:</div>
<div class="in" style="left:599px;top:711.2px;width:55px;height:13.8px;line-height:15.8px;line-height:19px"><span class="s v">0,0</span><svg class="sp" viewBox="0 0 5 9"><path d="M2.5 0.6L4.6 3.4H0.4zM2.5 8.4L4.6 5.6H0.4z" fill="#f0f0f0"/></svg></div>
<div class="l" style="left:656.4px;top:714.5px;transform:scaleX(0.850);transform-origin:0 50%">Z:</div>
<div class="in" style="left:667px;top:711.2px;width:55.5px;height:13.8px;line-height:15.8px;line-height:19px"><span class="s v">0,0</span><svg class="sp" viewBox="0 0 5 9"><path d="M2.5 0.6L4.6 3.4H0.4zM2.5 8.4L4.6 5.6H0.4z" fill="#f0f0f0"/></svg></div>
<div class="l" style="left:725.8px;top:714.2px;transform:scaleX(0.931);transform-origin:0 50%">Grid = 10,0</div>
<div class="a" style="left:703.8px;top:730.6px;width:1px;height:16px;background:#2c2c2c"></div>
<div class="a" style="left:705.2px;top:730.4px;width:17.6px;height:16.6px;background:#5a8cd2;border-radius:2.5px"></div>
<svg class="a" style="left:705.2px;top:730.4px" width="17.6" height="16.6" viewBox="0 0 17.6 16.6"><path d="M8.8 3.2L13.6 5.6V11L8.8 13.6L4 11V5.6zM4 5.6L8.8 8.2L13.6 5.6M8.8 8.2V13.6" fill="none" stroke="#e8f0ff" stroke-width="1.1" stroke-linejoin="round"/></svg>
<div class="l" style="left:726.4px;top:734.4px;transform:scaleX(0.886);transform-origin:0 50%">Add Time Tag</div>
<svg class="a" style="left:816px;top:709px" width="96" height="36" viewBox="0 0 96 36"><g fill="#eeeeee"><rect x="1.6" y="5" width="1.5" height="8.2"/><path d="M8.6 5V13.2L3.6 9.1z"/><path d="M14.4 5V13.2L9.4 9.1z"/><path d="M29 5V13.2L23.6 9.1z"/><rect x="30.2" y="5" width="1.7" height="8.2"/><rect x="33.4" y="5" width="1.7" height="8.2"/><path d="M43 3.2L52.6 9.2L43 15.2z" fill="#e2e2e2"/><path d="M57 14V17H54z"/><rect x="60.4" y="5" width="1.7" height="8.2"/><rect x="63.6" y="5" width="1.7" height="8.2"/><path d="M66.6 5V13.2L72 9.1z"/><path d="M81.6 5V13.2L86.6 9.1z"/><path d="M87.4 5V13.2L92.4 9.1z"/><rect x="92.8" y="5" width="1.5" height="8.2"/><path d="M7.4 24.2V30.4L3.2 27.3z"/><path d="M9 24.2V30.4L13.2 27.3z"/></g><g fill="#1c1c1c"><rect x="18.4" y="1" width="1.5" height="14.4"/><rect x="77" y="1" width="1.5" height="14.4"/><rect x="18.4" y="20" width="1.5" height="13.6"/><rect x="77" y="20" width="1.5" height="13.6"/></g><circle cx="87.2" cy="25.4" r="4.4" fill="#eeeeee"/><path d="M87.2 22V25.6H90.4" stroke="#333" stroke-width="1" fill="none"/><circle cx="91" cy="29.6" r="2.6" fill="#3a3200" stroke="#e6b422" stroke-width="1.3"/></svg>
<div class="in" style="left:836.6px;top:729.3px;width:55.8px;height:12.9px;line-height:14.9px;line-height:17.4px"><span class="s v">0</span><svg class="sp" viewBox="0 0 5 9"><path d="M2.5 0.6L4.6 3.4H0.4zM2.5 8.4L4.6 5.6H0.4z" fill="#f0f0f0"/></svg></div>
<div class="a" style="left:922.4px;top:710.2px;width:34px;height:33.8px;background:#5e5e5e;border-radius:3px"></div>
<svg class="a" style="left:922.4px;top:710.2px" width="34" height="33.8" viewBox="0 0 34 33.8"><path d="M6 13H13V5.4H18.4V13H25.6V18H18.4V25H13V18H6z" fill="#f4f4f4"/><path d="M18.6 21.4L25 15" stroke="#2fc4c4" stroke-width="1.6" fill="none"/><circle cx="17.4" cy="22.6" r="2.2" fill="none" stroke="#2fc4c4" stroke-width="1.4"/><path d="M23.4 16.6L24.8 18M21.8 18.2L23 19.4" stroke="#2fc4c4" stroke-width="1.1"/></svg>
<div class="b" style="left:960.5px;top:710.2px;width:37.5px;height:15.8px;line-height:19px;color:#e8e8e8;border-radius:3px;background:#606060"><span class="s c" style="transform:translateX(-50%) scaleX(0.885)">Auto Key</span></div>
<div class="b" style="left:960.5px;top:728.2px;width:37.5px;height:15.8px;line-height:19px;color:#e8e8e8;border-radius:3px;background:#606060"><span class="s c" style="transform:translateX(-50%) scaleX(0.863)">Set Key</span></div>
<div class="b" style="left:1002px;top:710.2px;width:93px;height:15.2px;line-height:18.6px;text-align:left;padding-left:3.6px;color:#e4e4e4;border-radius:2px"><span class="s" style="transform:scaleX(0.88);transform-origin:0 50%">Selected</span><svg style="position:absolute;right:7px;top:5.6px" width="6" height="4" viewBox="0 0 6 4"><path d="M0.2 0.2H5.8L3 3.8z" fill="#f0f0f0"/></svg></div>
<svg class="a" style="left:1003.4px;top:730.4px" width="17" height="15" viewBox="0 0 17 15"><path d="M3.6 2.6L1.2 11.2M8.8 2.6L11.2 11.2" stroke="#36c49a" stroke-width="1.6" fill="none"/><rect x="4.4" y="0.8" width="3.6" height="2.8" fill="none" stroke="#eee" stroke-width="1"/><path d="M2.2 2.2H4.2M8.2 2.2H10.4" stroke="#eee" stroke-width="1"/><circle cx="1.6" cy="2.4" r="0.9" fill="#eee"/><circle cx="10.8" cy="2.4" r="0.9" fill="#eee"/><path d="M15.4 10.4V13.8H12z" fill="#f0f0f0"/></svg>
<div class="b" style="left:1023.2px;top:729.2px;width:71.8px;height:15.4px;line-height:18.6px;color:#e8e8e8;border-radius:3px;background:#606060;line-height:20.4px"><span class="s c" style="transform:translateX(-50%) scaleX(0.927)">Key Filters...</span></div>
<svg class="a" style="left:1104px;top:709px" width="76" height="37" viewBox="0 0 76 37"><circle cx="8.8" cy="7.2" r="3.6" fill="none" stroke="#ededed" stroke-width="1.5"/><path d="M6.2 10L1.8 14.4" stroke="#ededed" stroke-width="1.7"/><g fill="#3ccdb8"><rect x="24.2" y="2.6" width="3.4" height="3.4"/><rect x="28.4" y="2.6" width="3.4" height="3.4"/><rect x="24.2" y="6.8" width="3.4" height="3.8"/><rect x="28.4" y="6.8" width="3.4" height="3.8"/></g><circle cx="24.4" cy="9.4" r="2.4" fill="#3a5a58" stroke="#e6e6e6" stroke-width="1.1"/><path d="M22.6 11.2L19.8 14.4" stroke="#e6e6e6" stroke-width="1.3"/><path d="M38.2 5.6V3H40.8M47.6 3H50.2V5.6M50.2 11.8V14.4H47.6M40.8 14.4H38.2V11.8" fill="none" stroke="#ededed" stroke-width="1.2"/><path d="M44.2 4.4L48 6.4V10.6L44.2 12.8L40.4 10.6V6.4z" fill="#3ccdc8"/><path d="M40.4 6.4L44.2 8.6L48 6.4M44.2 8.6V12.8" fill="none" stroke="#1a6a70" stroke-width="0.8"/><path d="M53.4 13.8V17.2H50z" fill="#f0f0f0"/><g transform="translate(2 0.2)"><path d="M64.4 3.2L67.4 4.8V10.4L64.4 12L61.4 10.4V4.8z" fill="#34c49c"/><path d="M64.4 6V12M61.4 4.8L64.4 6.4L67.4 4.8" stroke="#1a6a58" stroke-width="0.8" fill="none"/><path d="M59.4 8.4L61 9.6L59.4 10.8L57.8 9.6zM57.6 11L59.8 12.6L57.6 14.2L55.4 12.6zM62 12.4L64.4 14L62 15.6L59.6 14z" fill="#f0f0f0"/></g><path d="M73 13.8V17.2H69.6z" fill="#f0f0f0"/><path d="M3.2 21.8L12.2 26.8L3.2 32" fill="none" stroke="#ededed" stroke-width="1.4" stroke-linejoin="round"/><path d="M6.2 23.6A4 4 0 0 0 6.2 30.2" fill="none" stroke="#ededed" stroke-width="1.2"/><path d="M16.4 31.4V35H12.8z" fill="#f0f0f0"/><path transform="translate(-1.2 0)" d="M22.6 27L24.4 26.8V22.6a0.75 0.75 0 0 1 1.5 0V21.2a0.75 0.75 0 0 1 1.5 0V21.6a0.75 0.75 0 0 1 1.5 0V22.8a0.75 0.75 0 0 1 1.5 0V29.4a3.6 3.6 0 0 1-3.6 3.6H27a3 3 0 0 1-2.6-1.6z" fill="#f0f0f0"/><path d="M24.7 23V26.4M26.2 22V26.4M27.7 22.4V26.4" stroke="#b8b8b8" stroke-width="0.4" fill="none"/><path d="M35.2 31.4V35H31.6z" fill="#f0f0f0"/><path d="M38.8 29.4C38.8 32.4 48 30.6 50.6 24.6" fill="none" stroke="#ededed" stroke-width="1.3"/><path d="M40.4 26.6a3.6 3.6 0 0 1 3.6-4.4V26.6z" fill="#34c49c"/><path d="M44.6 22.2a3.6 3.6 0 0 1 3.2 3L44.6 26.6z" fill="#f0f0f0"/><path d="M40.4 27.4H47.4L45.6 29.6H41.4z" fill="#f0f0f0"/><path d="M53.4 31.4V35H50z" fill="#f0f0f0"/><rect x="57.6" y="21.2" width="11.2" height="11.6" rx="0.6" fill="#d4d4d4" stroke="#f4f4f4" stroke-width="1.2"/><rect x="58.6" y="27.4" width="4.4" height="4.6" fill="#242424"/><path d="M63 27L67 22.8M64.2 22.6H67.2V25.6" stroke="#242424" stroke-width="1.4" fill="none"/></svg>
<svg class="a" style="left:968px;top:758px" width="12" height="8" viewBox="0 0 12 8"><path d="M0.9 6.6L5.7 1.6L10.5 6.6" fill="none" stroke="#f2f2f2" stroke-width="1.1"/></svg>
<div class="l" style="left:987.4px;top:755.8px;font-size:9.2px;line-height:12px;color:#d8c850">33</div>
<div class="l" style="left:1007.6px;top:755.8px;font-size:10.4px;line-height:12px;color:#f0f0f0;font-family:'Liberation Serif',serif;margin-top:0.9px">11</div>
<div class="l" style="left:1024.8px;top:755.8px;font-size:9.4px;line-height:12px;color:#8e8e8e">3.5</div>
<svg class="a" style="left:1045px;top:756px" width="14" height="12" viewBox="0 0 14 12"><rect x="3.4" y="1.6" width="9.6" height="6.8" fill="none" stroke="#f0f0f0" stroke-width="1.1"/><path d="M6 10.8H11M8.4 8.4V10.8" stroke="#f0f0f0" stroke-width="1.1" fill="none"/><rect x="0.6" y="1" width="2.8" height="2.8" fill="#0d1113" stroke="#f0f0f0" stroke-width="1"/><path d="M2 3.8V10.6H4.4" stroke="#f0f0f0" stroke-width="1" fill="none"/></svg>
<svg class="a" style="left:1063.6px;top:755.6px" width="15" height="13" viewBox="0 0 15 13"><path d="M0.8 4.6H3L6.2 1.8V11.2L3 8.4H0.8z" fill="none" stroke="#f0f0f0" stroke-width="1"/><path d="M8 4.6a2.6 2.6 0 0 1 0 3.8" fill="none" stroke="#f0f0f0" stroke-width="1"/><path d="M9.8 3a4.8 4.8 0 0 1 0 7" fill="none" stroke="#9a9a9a" stroke-width="1"/><path d="M11.6 1.4a7 7 0 0 1 0 10.2" fill="none" stroke="#6a6a6a" stroke-width="1"/></svg>
<div class="l" style="left:1086.4px;top:755.8px;font-size:8.9px;line-height:12px;color:#f4f4f4;-webkit-text-stroke:0.3px #f4f4f4">РУС</div>
<div class="l" style="left:1114.8px;top:755.8px;font-size:9.1px;line-height:12px;color:#f4f4f4;-webkit-text-stroke:0.3px #f4f4f4">21:19</div>
<svg class="a" style="left:1150.6px;top:754.8px" width="15" height="14" viewBox="0 0 15 14"><path d="M0.6 0.6H14V10.2H9.2L7.3 12.6L5.4 10.2H0.6z" fill="#f4f4f4"/><path d="M3 3.6H11.6M3 5.8H11.6M3 8H8.4" stroke="#0d1113" stroke-width="1"/></svg>
<div class="a" style="left:423.2px;top:651px;width:374.4px;height:108.5px;border:4.8px solid #e34a38;border-radius:5.5px"></div>
</div>
</body></html>
